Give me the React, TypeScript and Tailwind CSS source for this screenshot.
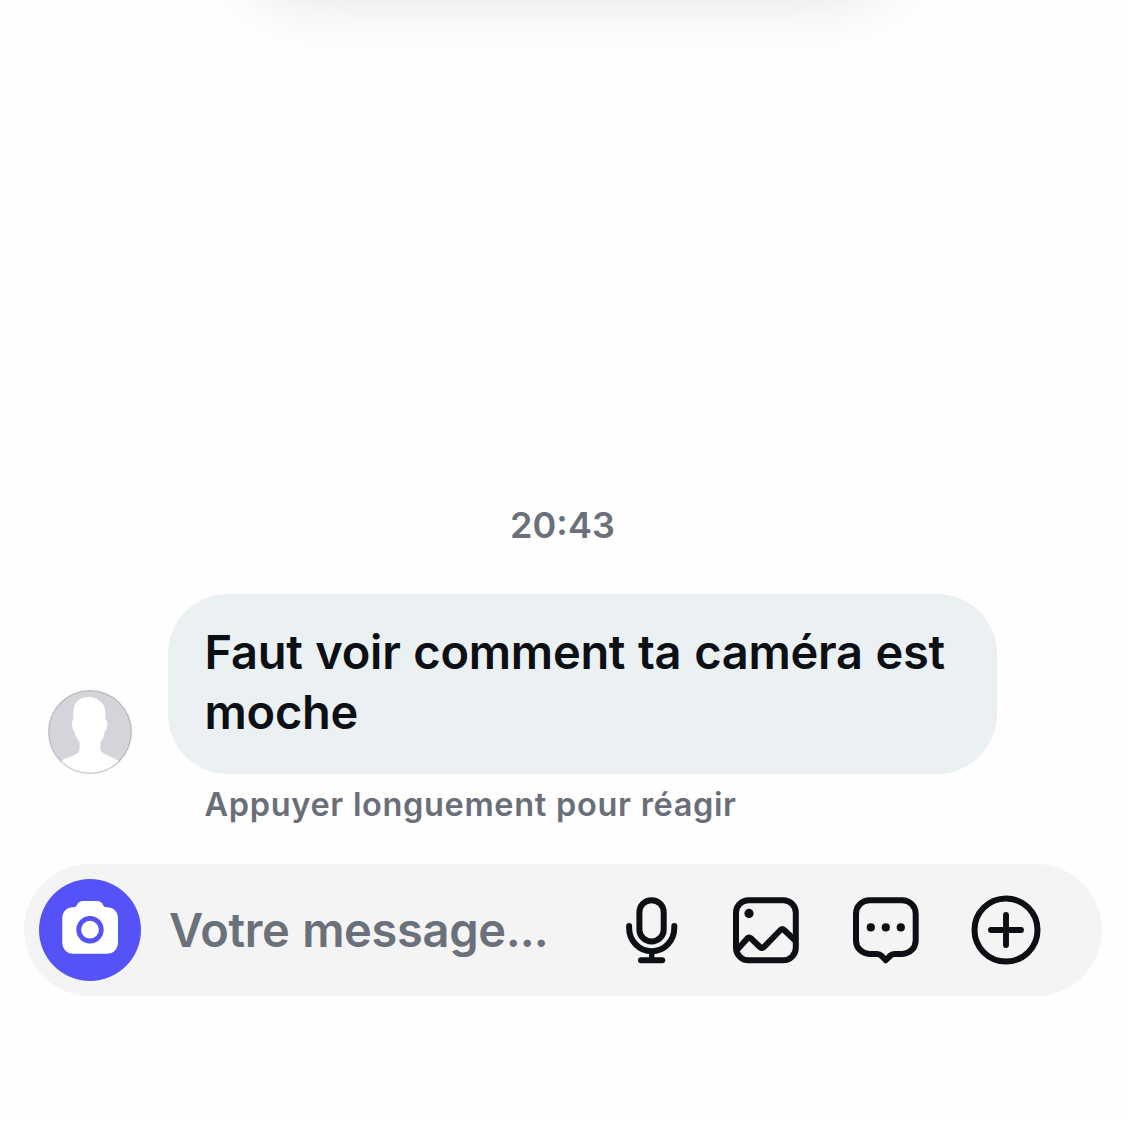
function Avatar() {
  return (
    <svg className="size-[84px] shrink-0" viewBox="48 690 84 84" fill="none">
      <clipPath id="avatar-clip">
        <circle cx="90" cy="732" r="41.5" />
      </clipPath>
      <circle cx="90" cy="732" r="41.5" fill="#d4d4db" />
      <path
        clipPath="url(#avatar-clip)"
        fill="#ffffff"
        d="M60 761.500 C67 757 76 755.500 78.800 752 C80 749.500 79.500 746 79.500 741.500 C76.500 738.500 75 735.500 74.500 731.500 C71.500 729.500 71.500 721 73.300 719.500 C73 711 73.500 705.500 77 701.500 C81.500 696.500 91 695.800 96.500 698.500 C98 701 101.500 701 103.500 705 C105.500 709 105.500 714 105.300 719.500 C108.500 721 107.500 729.500 104.800 731.500 C104.300 735.500 103.500 738.500 100.700 741.500 C100.200 746 99.800 749.500 101.500 752 C105 755.500 113 757 120 761.500 L118 780 L62 780 Z"
      />
      <circle cx="90" cy="732" r="41.3" stroke="#85858f" strokeOpacity="0.45" strokeWidth="1.2" />
    </svg>
  );
}

function CameraIcon() {
  return (
    <svg className="size-[102px]" viewBox="39 879 102 102" fill="none">
      <path
        fill="#ffffff"
        d="M73 907.300 C75.500 907.300 76.200 906.600 77 904.800 C78.200 902.200 80.300 901 83 901 H97 C99.700 901 101.800 902.200 103 904.800 C103.800 906.600 104.500 907.300 107 907.300 C113.500 907.300 118 911.800 118 918.300 V942 C118 949.200 113.700 953.700 106.500 953.700 H73.800 C66.600 953.700 62.300 949.200 62.300 942 V918.300 C62.300 911.800 66.800 907.300 73 907.300 Z"
      />
      <circle cx="90" cy="929.7" r="11.3" stroke="#5552f7" strokeWidth="4.8" />
    </svg>
  );
}

function MicIcon() {
  return (
    <svg className="h-[70px] w-[54px]" viewBox="625 895 54 70" fill="none" stroke="#0c1014" strokeWidth="6" strokeLinecap="round">
      <rect x="639.4" y="900.2" width="24.3" height="41.3" rx="12.1" />
      <path d="M629.100 926 V927.500 C629.100 941 639 951.200 651.700 951.200 C664.400 951.200 674.300 941 674.300 927.500 V926" />
      <path d="M651.700 951.500 V960" strokeWidth="5.400" strokeLinecap="butt" />
      <path d="M641 960.300 H662.200" />
    </svg>
  );
}

function GalleryIcon() {
  return (
    <svg className="h-[70px] w-[68px]" viewBox="732 895 68 70" fill="none" stroke="#0c1014" strokeWidth="6" strokeLinecap="butt" strokeLinejoin="round">
      <rect x="736" y="900.2" width="59.8" height="60" rx="12.5" />
      <circle cx="749" cy="913.4" r="4.6" fill="#0c1014" stroke="none" />
      <path d="M736.500 950.500 L747.300 938.400 Q749 936.600 750.800 938.300 L760.200 947.200 Q762 948.800 763.800 947.100 L780.500 930 Q782.300 928.400 784.100 930 L795.500 940.800" />
    </svg>
  );
}

function StickerIcon() {
  return (
    <svg className="h-[70px] w-[68px]" viewBox="852 895 68 70" fill="none" stroke="#0c1014" strokeWidth="6" strokeLinejoin="round">
      <path d="M869.500 900.200 H902.200 A13.500 13.500 0 0 1 915.700 913.700 V940.400 A13.500 13.500 0 0 1 902.200 953.900 H894.500 C892.500 953.900 891.500 954.300 890.300 955.600 L885.800 960.300 L881.300 955.600 C880.100 954.300 879.100 953.900 877.100 953.900 H869.500 A13.500 13.500 0 0 1 856 940.400 V913.700 A13.500 13.500 0 0 1 869.500 900.200 Z" />
      <g fill="#0c1014" stroke="none">
        <circle cx="870.8" cy="927.4" r="4.1" />
        <circle cx="885.8" cy="927.4" r="4.1" />
        <circle cx="900.8" cy="927.4" r="4.1" />
      </g>
    </svg>
  );
}

function PlusIcon() {
  return (
    <svg className="size-[70px]" viewBox="971 895.3 70 70" fill="none" stroke="#0c1014" strokeWidth="6" strokeLinecap="round">
      <circle cx="1006" cy="930.3" r="31.5" />
      <path d="M991 930.300 H1021 M1006 915.300 V945.300" strokeWidth="5.900" />
    </svg>
  );
}

export default function App() {
  return (
    <main className="relative flex h-[1122px] w-[1126px] flex-col overflow-hidden bg-[#fefefe] font-['Inter',sans-serif] font-semibold">
      <div className="absolute -top-[120px] left-[250px] h-[112px] w-[640px] rounded-[56px] shadow-[0_0_64px_4px_rgba(0,0,0,0.12)]" />

      <time className="mt-[500px] block h-[50px] pr-px text-center text-[36px] leading-[50px] tracking-[0.1px] text-[#6a717a]">
        20<span className="inline-block -translate-y-[3px]">:</span>43
      </time>

      <section className="mt-[44px] flex items-end gap-9 pl-12">
        <Avatar />
        <p className="h-[180px] w-[829px] rounded-[60px] bg-[#ebf0f3] pt-[28px] pl-[36.5px] text-[47px] leading-[60px] tracking-[-0.28px] text-[#0c1014] [word-spacing:1.3px]">
          Faut voir comment ta caméra est
          <br />
          moche
        </p>
      </section>

      <p className="mt-[10px] h-[42px] pl-[204.5px] text-[32.5px] leading-[42px] tracking-[0.65px] text-[#6a6e79] [word-spacing:0.3px]">Appuyer longuement pour réagir</p>

      <footer className="mx-6 mt-[38px] flex h-[132px] items-center rounded-full bg-[#f4f4f5] pl-[15px]">
        <button aria-label="Appareil photo" className="size-[102px] rounded-full bg-[#5552f7]">
          <CameraIcon />
        </button>
        <span className="ml-[28px] w-[456px] whitespace-nowrap text-[47px] leading-[60px] tracking-[-0.35px] text-[#6a717a] [word-spacing:1.3px]">
          Votre message<span className="tracking-[-0.9px]">...</span>
        </span>
        <button aria-label="Message vocal"><MicIcon /></button>
        <button aria-label="Galerie" className="ml-[53px]"><GalleryIcon /></button>
        <button aria-label="Autocollants" className="ml-[52px]"><StickerIcon /></button>
        <button aria-label="Plus" className="ml-[51px]"><PlusIcon /></button>
      </footer>
    </main>
  );
}
